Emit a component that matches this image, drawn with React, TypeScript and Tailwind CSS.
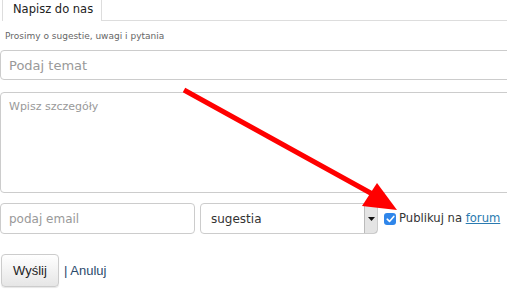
import React from "react";

export default function App() {
  return (
    <div
      className="relative w-[507px] h-[298px] overflow-hidden bg-white text-[#333]"
      style={{ fontFamily: '"DejaVu Sans", "Liberation Sans", sans-serif' }}
    >
      <div className="flex h-[21px]">
        <div className="ml-[2px] w-[100px] h-full border-l border-r border-[#ddd] flex items-center pl-[10px] text-[11.5px] text-[#222] pb-[1px] shrink-0">
          Napisz do nas
        </div>
        <div className="flex-1 border-b border-[#ddd]" />
      </div>
      <p className="mt-[9px] ml-[5px] text-[9px] leading-[12px] text-[#666]">
        Prosimy o sugestie, uwagi i pytania
      </p>
      <input
        className="block mt-[8px] w-[540px] h-[30px] border border-[#ccc] rounded-[4px] pl-[8px] text-[13px] placeholder:text-[#999] outline-none"
        placeholder="Podaj temat"
      />
      <textarea
        className="block mt-[12px] w-[540px] h-[101px] border border-[#ccc] rounded-[4px] pl-[8px] pt-[6px] text-[11px] placeholder:text-[#999] outline-none resize-none"
        placeholder="Wpisz szczegóły"
      />
      <div className="flex items-center mt-[10px] whitespace-nowrap">
        <input
          className="block shrink-0 w-[195px] h-[31px] border border-[#ccc] rounded-[4px] pl-[8px] text-[12px] placeholder:text-[#999] outline-none"
          placeholder="podaj email"
        />
        <div className="ml-[5px] shrink-0 w-[178px] h-[31px] flex border border-[#ccc] rounded-[4px] overflow-hidden">
          <div className="flex-1 flex items-center pl-[10px] text-[12px] text-[#333]">sugestia</div>
          <div className="w-[13px] h-full bg-[#e4e4e4] border-l border-[#bbb] flex items-center justify-center shadow-[2px_2px_1px_#777]">
            <svg width="7" height="4" viewBox="0 0 7 4">
              <polygon points="0,0 7,0 3.5,4" fill="#111" />
            </svg>
          </div>
        </div>
        <div className="ml-[6px] shrink-0 w-[12px] h-[12px] rounded-[3px] bg-[#2f86ea] flex items-center justify-center">
          <svg width="9" height="8" viewBox="0 0 9 8">
            <path d="M1.2 4.2 L3.5 6.4 L7.8 1.4" stroke="#fff" strokeWidth="1.6" fill="none" strokeLinecap="round" strokeLinejoin="round" />
          </svg>
        </div>
        <span className="ml-[3px] text-[11.6px] text-[#333]">
          Publikuj na <a className="text-[#2a7ab0] underline">forum</a>
        </span>
      </div>
      <div className="flex items-center mt-[20px]">
        <button
          className="ml-[1px] w-[58px] h-[33px] border border-[#ccc] rounded-[4px] bg-gradient-to-b from-white to-[#e6e6e6] shadow-[0_1px_1px_rgba(0,0,0,0.1)] text-[13px] text-[#222]"
          style={{ fontFamily: '"Liberation Sans", Arial, sans-serif' }}
        >
          Wyślij
        </button>
        <span
          className="ml-[5px] text-[13px] text-[#2c4a6b]"
          style={{ fontFamily: '"Liberation Sans", Arial, sans-serif' }}
        >
          | Anuluj
        </span>
      </div>
      <svg className="absolute left-0 top-0 pointer-events-none" width="507" height="298">
        <line x1="184" y1="90" x2="376" y2="196" stroke="#ff0000" strokeWidth="5" />
        <polygon points="377,183 362,206 397,210" fill="#ff0000" />
      </svg>
    </div>
  );
}
